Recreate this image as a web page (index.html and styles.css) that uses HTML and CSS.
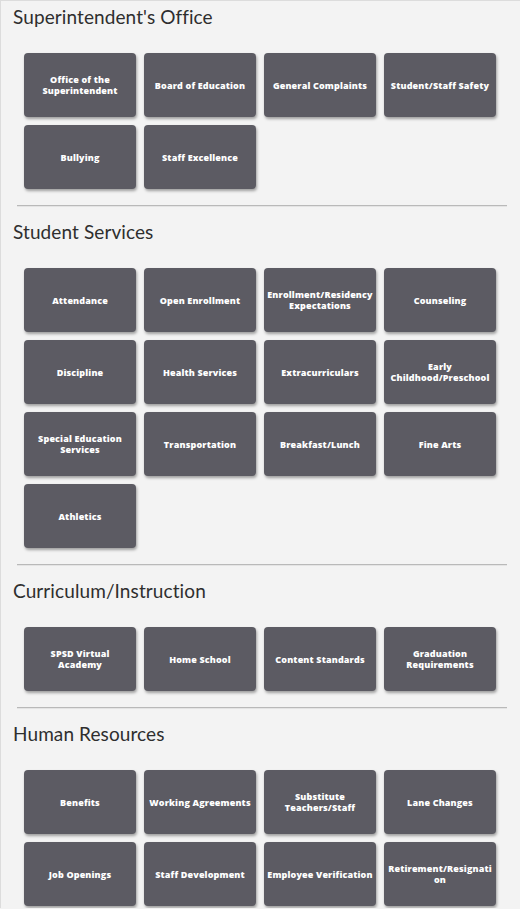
FILE: index.html
```html
<!DOCTYPE html>
<html>
<head>
<meta charset="utf-8">
<link rel="stylesheet" href="styles.css">
</head>
<body>
<div class="page">
  <section class="section">
    <h2 class="title">Superintendent's Office</h2>
    <div class="grid">
      <a class="tile">Office of the Superintendent</a>
      <a class="tile">Board of Education</a>
      <a class="tile">General Complaints</a>
      <a class="tile">Student/Staff Safety</a>
      <a class="tile">Bullying</a>
      <a class="tile">Staff Excellence</a>
    </div>
  </section>
  <hr class="divider">
  <section class="section">
    <h2 class="title">Student Services</h2>
    <div class="grid">
      <a class="tile">Attendance</a>
      <a class="tile">Open Enrollment</a>
      <a class="tile">Enrollment/Residency Expectations</a>
      <a class="tile">Counseling</a>
      <a class="tile">Discipline</a>
      <a class="tile">Health Services</a>
      <a class="tile">Extracurriculars</a>
      <a class="tile">Early Childhood/Preschool</a>
      <a class="tile">Special Education Services</a>
      <a class="tile">Transportation</a>
      <a class="tile">Breakfast/Lunch</a>
      <a class="tile">Fine Arts</a>
      <a class="tile">Athletics</a>
    </div>
  </section>
  <hr class="divider">
  <section class="section">
    <h2 class="title">Curriculum/Instruction</h2>
    <div class="grid">
      <a class="tile">SPSD Virtual<br>Academy</a>
      <a class="tile">Home School</a>
      <a class="tile">Content Standards</a>
      <a class="tile">Graduation Requirements</a>
    </div>
  </section>
  <hr class="divider">
  <section class="section">
    <h2 class="title">Human Resources</h2>
    <div class="grid">
      <a class="tile">Benefits</a>
      <a class="tile">Working Agreements</a>
      <a class="tile">Substitute Teachers/Staff</a>
      <a class="tile">Lane Changes</a>
      <a class="tile">Job Openings</a>
      <a class="tile">Staff Development</a>
      <a class="tile">Employee Verification</a>
      <a class="tile">Retirement/Resignation</a>
    </div>
  </section>
</div>
</body>
</html>
```
FILE: styles.css
```css
html, body {
  margin: 0;
  padding: 0;
  background: #f3f3f3;
}
.page {
  border-top: 1px solid #dcdcdc;
  border-left: 1px solid #dcdcdc;
  min-height: 908px;
  box-sizing: border-box;
  padding-top: 4px;
  font-family: Lato, "Liberation Sans", sans-serif;
}
.section {
  margin: 0;
}
.title {
  margin: 0 0 24px 12px;
  font-size: 19px;
  line-height: 24px;
  font-weight: 400;
  color: #2e2e2e;
  letter-spacing: 0.1px;
}
.grid {
  display: grid;
  grid-template-columns: repeat(4, 112px);
  grid-auto-rows: 64px;
  gap: 8px;
  margin-left: 23px;
}
.tile {
  display: flex;
  flex-direction: column;
  align-items: center;
  justify-content: center;
  text-align: center;
  background: #5c5b63;
  color: #fff;
  border-radius: 4px;
  box-shadow: 1px 2px 3px rgba(0, 0, 0, 0.35);
  font-family: "Open Sans", "DejaVu Sans", sans-serif;
  font-size: 9px;
  line-height: 11px;
  font-weight: 800;
  letter-spacing: 0.15px;
  padding: 0 3px;
  overflow-wrap: anywhere;
  box-sizing: border-box;
}
.divider {
  border: 0;
  height: 1px;
  background: #b9b9b9;
  margin: 16px 0 14px 16px;
  width: 490px;
  box-shadow: 0 1px 0 #e4e4e4;
}
```
